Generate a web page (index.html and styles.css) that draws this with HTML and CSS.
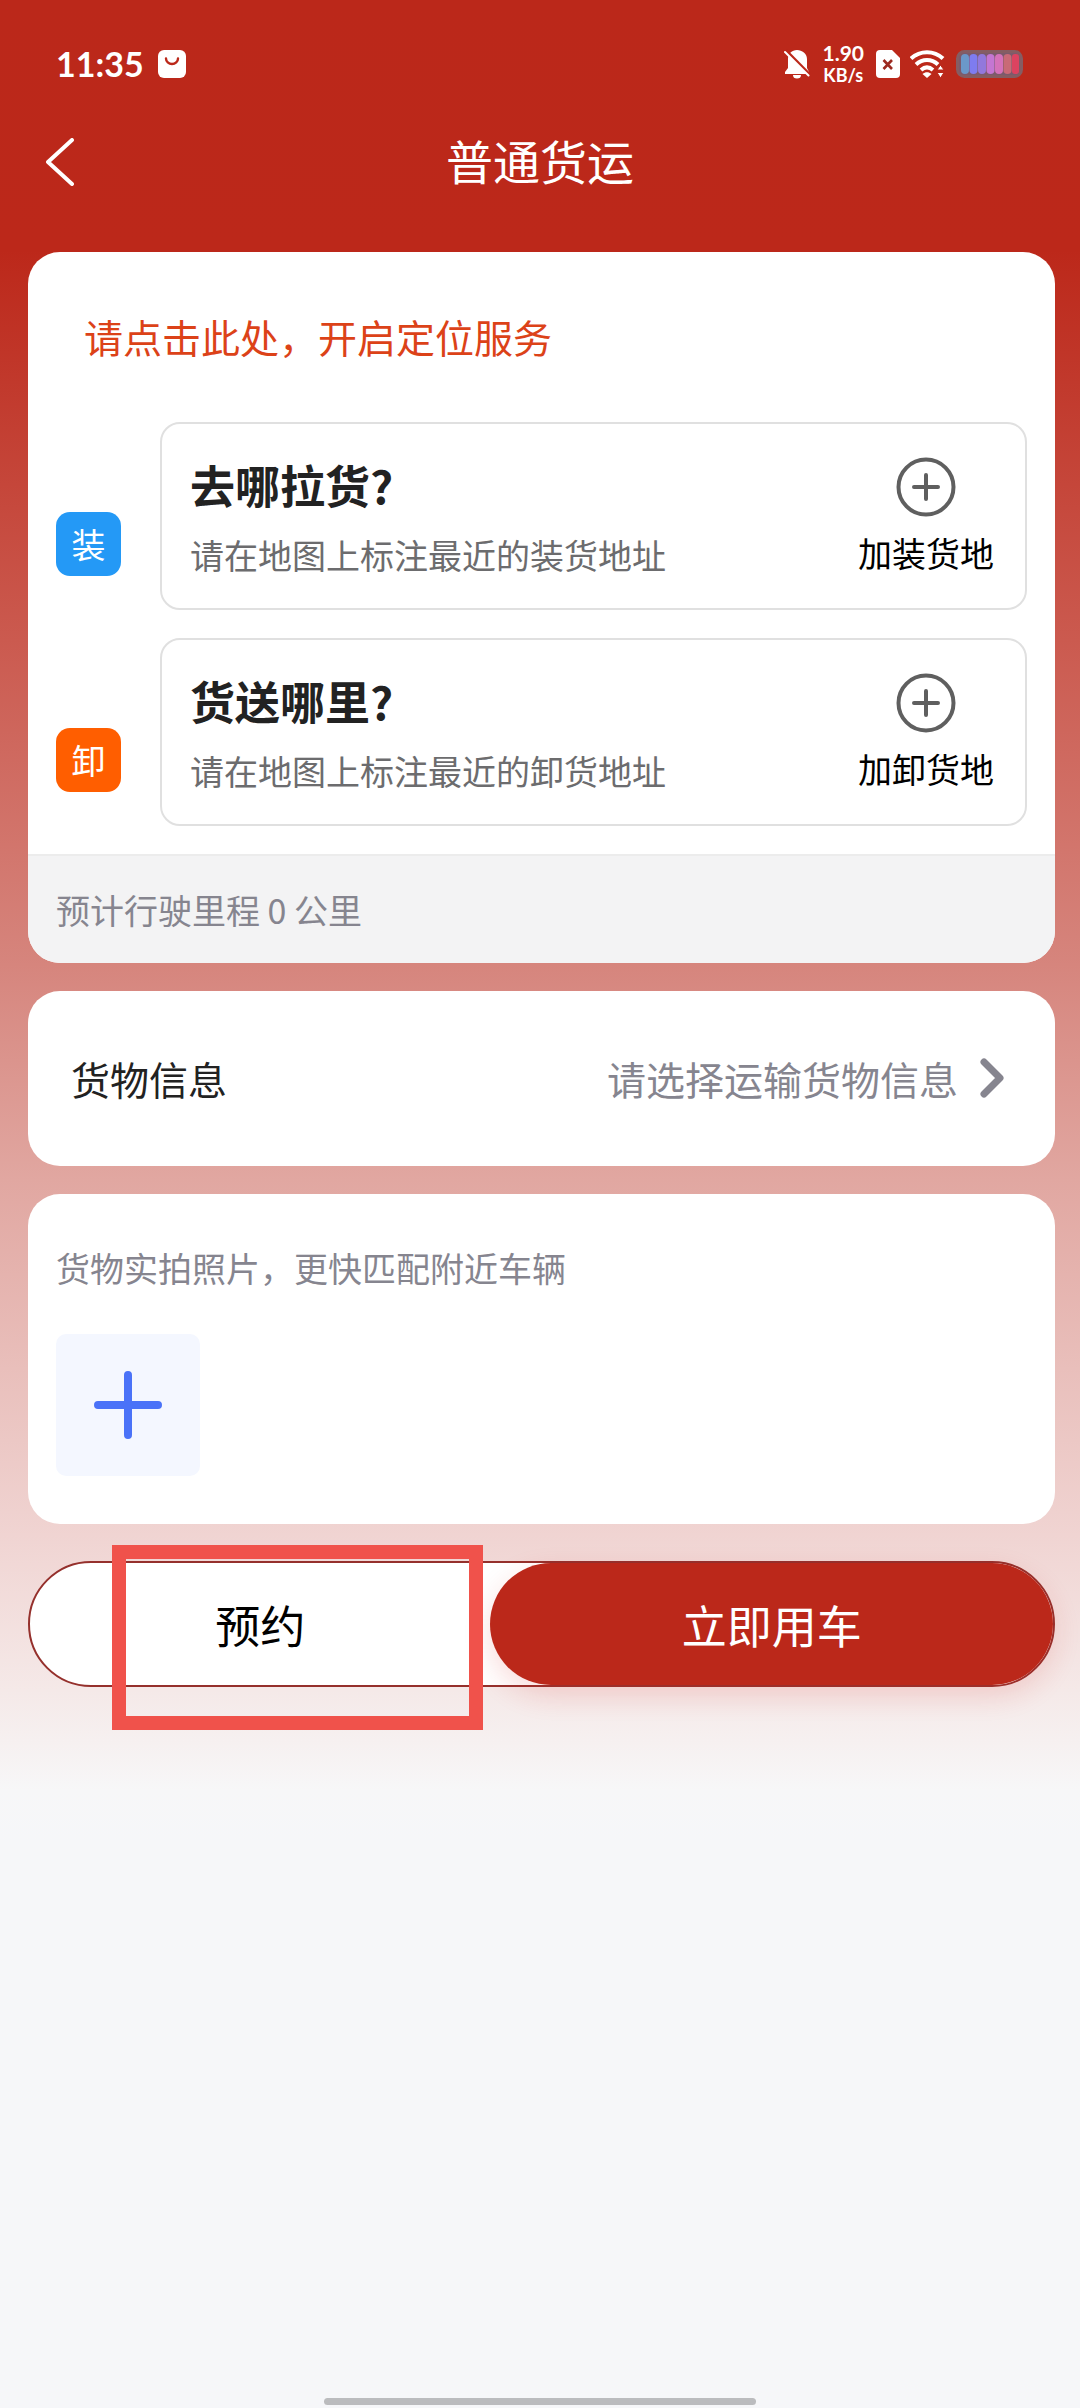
FILE: index.html
```html
<!DOCTYPE html>
<html lang="zh-CN">
<head>
<meta charset="utf-8">
<meta name="viewport" content="width=device-width, initial-scale=1">
<title>普通货运</title>
<link rel="stylesheet" href="styles.css">
</head>
<body>
<div class="statusbar">
  <div class="status-left">
    <span class="clock">11:35</span>
    <svg width="28" height="28" viewBox="0 0 28 28" aria-hidden="true"><rect width="28" height="28" rx="6" fill="#fff"/><path d="M8 8.500a6 5.500 0 0 0 12 0" fill="none" stroke="#bb281a" stroke-width="2.400" stroke-linecap="round"/></svg>
  </div>
  <div class="status-right">
    <svg width="26" height="30" viewBox="0 0 26 30" aria-hidden="true"><path d="M13 1c-5 0-9 3.500-9 9v9l-3 4v2h24v-2l-2-4v-9c0-5.500-5-9-10-9zM9 26a4 3.500 0 0 0 8 0z" fill="#fff"/><path d="M2 1.500L26 26" stroke="#bb281a" stroke-width="3"/><path d="M1 3L24.500 26.500" stroke="#fff" stroke-width="2" stroke-linecap="round"/></svg>
    <span class="speed"><span class="speed-value">1.90</span><span class="speed-unit">KB/s</span></span>
    <svg width="24" height="28" viewBox="0 0 24 28" aria-hidden="true"><path d="M4 0h12l8 8v16a4 4 0 0 1-4 4H4a4 4 0 0 1-4-4V4a4 4 0 0 1 4-4z" fill="#fff"/><path d="M7.500 10l8.500 9M16 10l-8.500 9" stroke="#9c2a20" stroke-width="2.600"/></svg>
    <svg width="36" height="28" viewBox="0 0 36 28" aria-hidden="true"><g fill="none" stroke="#fff" stroke-width="4"><path d="M1 8.500c9-8.500 23-8.500 32 0"/><path d="M6 14.500c6.500-6 15.500-6 22 0"/><path d="M11 20c4-3.500 8-3.500 12 0"/></g><path d="M12.500 24c3-2.500 6-2.500 9 0L17 28z" fill="#fff"/><path d="M27 20l3.500-5 3.500 5zM27 22.500h7L30.500 28z" fill="#fff" stroke="#bb281a" stroke-width="1"/></svg>
    <svg width="68" height="28" viewBox="0 0 68 28" aria-hidden="true"><rect x="1.500" y="1.500" width="64" height="25" rx="7" fill="#7c5a6b" stroke="#855d63" stroke-width="3"/><g><rect x="5" y="4" width="8" height="20" rx="4" fill="#6b98c9"/><rect x="13.500" y="4" width="8" height="20" rx="4" fill="#7e7cf0"/><rect x="22" y="4" width="8" height="20" rx="4" fill="#9278dc"/><rect x="30.500" y="4" width="8" height="20" rx="4" fill="#c476d2"/><rect x="39" y="4" width="8" height="20" rx="4" fill="#d472ba"/><rect x="47.500" y="4" width="8" height="20" rx="4" fill="#c96a77"/><rect x="56" y="4" width="7" height="20" rx="3" fill="#dc4360"/></g></svg>
  </div>
</div>

<header class="navbar">
  <button class="back" type="button" aria-label="返回"><svg width="28" height="48" viewBox="0 0 28 48" aria-hidden="true"><path d="M26 2L2 24l24 22" fill="none" stroke="#fff" stroke-width="4" stroke-linecap="round" stroke-linejoin="round"/></svg></button>
  <h1 class="title">普通货运</h1>
</header>

<main class="content">
  <section class="card route">
    <button class="locate" type="button">请点击此处，开启定位服务</button>
    <div class="stops">
      <div class="stop">
        <span class="badge badge-load">装</span>
        <div class="stop-box">
          <button class="place" type="button"><span class="place-title">去哪拉货?</span><span class="place-hint">请在地图上标注最近的装货地址</span></button>
          <button class="add" type="button"><svg width="60" height="60" viewBox="0 0 60 60" aria-hidden="true"><g fill="none" stroke="#5f5f5f" stroke-width="4" stroke-linecap="round"><circle cx="30" cy="30" r="27.500"/><path d="M30 18v24M18 30h24"/></g></svg><span>加装货地</span></button>
        </div>
      </div>
      <div class="stop">
        <span class="badge badge-unload">卸</span>
        <div class="stop-box">
          <button class="place" type="button"><span class="place-title">货送哪里?</span><span class="place-hint">请在地图上标注最近的卸货地址</span></button>
          <button class="add" type="button"><svg width="60" height="60" viewBox="0 0 60 60" aria-hidden="true"><g fill="none" stroke="#5f5f5f" stroke-width="4" stroke-linecap="round"><circle cx="30" cy="30" r="27.500"/><path d="M30 18v24M18 30h24"/></g></svg><span>加卸货地</span></button>
        </div>
      </div>
    </div>
    <p class="distance">预计行驶里程 0 公里</p>
  </section>

  <button class="card cargo" type="button">
    <span class="cargo-label">货物信息</span>
    <span class="cargo-value">请选择运输货物信息</span>
    <svg width="24" height="40" viewBox="0 0 24 40" aria-hidden="true"><path d="M4 4l16 16L4 36" fill="none" stroke="#86858f" stroke-width="7" stroke-linecap="round" stroke-linejoin="round"/></svg>
  </button>

  <section class="card photos">
    <h2 class="photos-title">货物实拍照片，更快匹配附近车辆</h2>
    <button class="upload" type="button" aria-label="添加照片"><svg width="68" height="68" viewBox="0 0 68 68" aria-hidden="true"><path d="M34 4v60M4 34h60" stroke="#4a72f8" stroke-width="8" stroke-linecap="round"/></svg></button>
  </section>

  <div class="actions">
    <button class="reserve" type="button">预约</button>
    <button class="order" type="button">立即用车</button>
    <span class="marker"></span>
  </div>
</main>
<div class="home-bar"></div>
</body>
</html>
```

FILE: styles.css
```css
* {
  box-sizing: border-box;
}

body {
  margin: 0;
  min-height: 100vh;
  display: flex;
  flex-direction: column;
  font-family: "Noto Sans CJK SC", sans-serif;
  font-size: 34px;
  line-height: 48px;
  color: #000;
  background: #f6f7f9 linear-gradient(#bb281a 0, #bc281a 250px, #cb5a4f 640px, #d6857d 965px, #e1a7a1 1180px, #f0d4d2 1535px, #f5e9e8 1690px, #f7f7f8 1790px, #f6f7f9 1840px) no-repeat;
}

h1,
h2,
p {
  margin: 0;
  font-weight: 400;
}

button {
  margin: 0;
  padding: 0;
  border: 0;
  background: none;
  font: inherit;
  color: inherit;
  text-align: left;
  cursor: pointer;
}

svg {
  display: block;
  flex: none;
}

.statusbar {
  display: flex;
  justify-content: space-between;
  align-items: center;
  height: 128px;
  padding: 0 56px;
  color: #fff;
  font-family: Lato, sans-serif;
  font-weight: 700;
}

.status-left {
  display: flex;
  align-items: center;
  gap: 14px;
}

.clock {
  font-size: 34px;
}

.status-right {
  display: flex;
  align-items: center;
  gap: 10px;
}

.speed {
  display: flex;
  flex-direction: column;
  align-items: center;
  margin: 0 2px;
  line-height: 22px;
}

.speed-value {
  font-size: 21px;
}

.speed-unit {
  font-size: 18px;
}

.navbar {
  display: grid;
  grid-template-columns: 1fr auto 1fr;
  align-items: center;
  height: 64px;
  padding: 0 46px;
  color: #fff;
}

.back {
  padding-top: 4px;
}

.title {
  font-size: 47px;
  line-height: 64px;
}

.content {
  display: flex;
  flex-direction: column;
  gap: 28px;
  padding: 60px 25px 0 28px;
}

.card {
  border-radius: 32px;
  background: #fff;
  overflow: hidden;
}

.locate {
  display: block;
  padding: 56px 56px 58px;
  font-size: 39px;
  line-height: 56px;
  color: #dc4218;
}

.stops {
  display: flex;
  flex-direction: column;
  gap: 28px;
  padding: 0 28px 28px;
}

.stop {
  display: flex;
  align-items: flex-end;
  gap: 39px;
}

.badge {
  width: 65px;
  margin-bottom: 34px;
  border-radius: 14px;
  line-height: 64px;
  text-align: center;
  color: #fff;
}

.badge-load {
  background: #2499f6;
}

.badge-unload {
  background: #ff5e00;
}

.stop-box {
  flex: 1;
  display: flex;
  justify-content: space-between;
  align-items: center;
  padding: 31px 31px 29px 28px;
  border: 2px solid #e0e0e0;
  border-radius: 20px;
}

.place {
  display: flex;
  flex-direction: column;
  gap: 16px;
}

.place-title {
  font-size: 45px;
  font-weight: 700;
  line-height: 60px;
  color: #222;
}

.place-hint {
  color: #6c6c6e;
}

.add {
  display: flex;
  flex-direction: column;
  align-items: center;
  gap: 12px;
}

.distance {
  padding: 28px;
  border-top: 2px solid #ececec;
  line-height: 51px;
  color: #86858f;
  background: #f3f3f4;
}

.cargo {
  display: flex;
  align-items: center;
  padding: 59px 51px 60px 43px;
  font-size: 39px;
  line-height: 56px;
}

.cargo-label {
  flex: 1;
  color: #222;
}

.cargo-value {
  margin-right: 22px;
  color: #86858f;
}

.photos {
  padding: 50px 28px 48px;
}

.photos-title {
  font-size: 34px;
  color: #86858f;
}

.upload {
  display: grid;
  place-items: center;
  width: 144px;
  height: 142px;
  margin-top: 42px;
  border-radius: 10px;
  background: #f4f7ff;
}

.actions {
  position: relative;
  display: flex;
  margin-top: 9px;
  border: 2px solid #95302c;
  border-radius: 64px;
  background: #fff;
  font-size: 45px;
  line-height: 60px;
}

.actions button {
  padding: 32px 0 30px;
  text-align: center;
}

.reserve {
  flex: 45;
}

.order {
  flex: 55;
  border-radius: 64px;
  color: #fff;
  background: #bb281a;
  box-shadow: 0 10px 28px rgba(220, 40, 30, 0.16);
}

/* Tutorial frame laid over the reserve button */
.marker {
  position: absolute;
  top: -18px;
  bottom: -45px;
  left: 8%;
  width: 371px;
  border: 14px solid #f0524b;
  pointer-events: none;
}

.home-bar {
  width: 40%;
  height: 7px;
  margin: auto auto 3px;
  border-radius: 4px;
  background: #bbbcbe;
}
```
